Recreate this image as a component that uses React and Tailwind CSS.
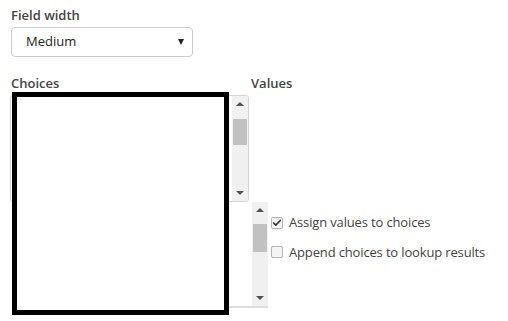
import { Check } from 'lucide-react'

function Scrollbar({ thumbTop, thumbHeight }) {
  return (
    <div className="relative flex w-[16px] flex-col items-center justify-between bg-[#f0f0f0] py-[6px]">
      <span className="h-0 w-0 border-x-[4px] border-b-[4px] border-x-transparent border-b-[#505050]" />
      <span className="absolute left-[1px] w-[14px] bg-[#c1c1c1]" style={{ top: thumbTop, height: thumbHeight }} />
      <span className="h-0 w-0 border-x-[4px] border-t-[4px] border-x-transparent border-t-[#505050]" />
    </div>
  )
}

function Checkbox({ checked, label }) {
  return (
    <label className="flex items-center gap-[6px]">
      <span className="flex h-[12px] w-[12px] items-center justify-center rounded-[2px] border border-[#b5b5b5] bg-[#f4f4f4]">
        {checked && <Check size={10} strokeWidth={4} className="text-[#333]" />}
      </span>
      <span className="tracking-[-0.15px]">{label}</span>
    </label>
  )
}

export default function App() {
  return (
    <div className="relative h-[321px] w-[508px] bg-white pl-[11px] pt-[6px] font-['Open_Sans',sans-serif] text-[13px] text-[#444]">
      <div className="font-semibold leading-[18px]">Field width</div>
      <div className="mt-[3px] flex h-[30px] w-[182px] items-center justify-between rounded-[4px] border border-[#ccc] pl-[14px] pr-[8px] text-[#222]">
        <span>Medium</span>
        <span className="h-0 w-0 border-x-[3px] border-t-[6px] border-x-transparent border-t-[#222]" />
      </div>

      <div className="mt-[17px] flex font-semibold leading-[18px]">
        <span className="w-[240px]">Choices</span>
        <span>Values</span>
      </div>

      <div className="-ml-[1px] mt-[3px] flex h-[107px] w-[239px] justify-end overflow-hidden rounded-[3px] border border-[#d5d5d5]">
        <Scrollbar thumbTop={23} thumbHeight={26} />
      </div>

      <div className="flex">
        <div className="ml-[3px] flex h-[106px] w-[254px] justify-end border-b-2 border-[#ddd]">
          <Scrollbar thumbTop={22} thumbHeight={28} />
        </div>
        <div className="ml-[3px] mt-[11px] flex flex-col gap-[10px]">
          <Checkbox checked label="Assign values to choices" />
          <Checkbox label="Append choices to lookup results" />
        </div>
      </div>

      <div className="absolute left-[12px] top-[92px] h-[223px] w-[217px] border-[5px] border-black bg-white" />
    </div>
  )
}
